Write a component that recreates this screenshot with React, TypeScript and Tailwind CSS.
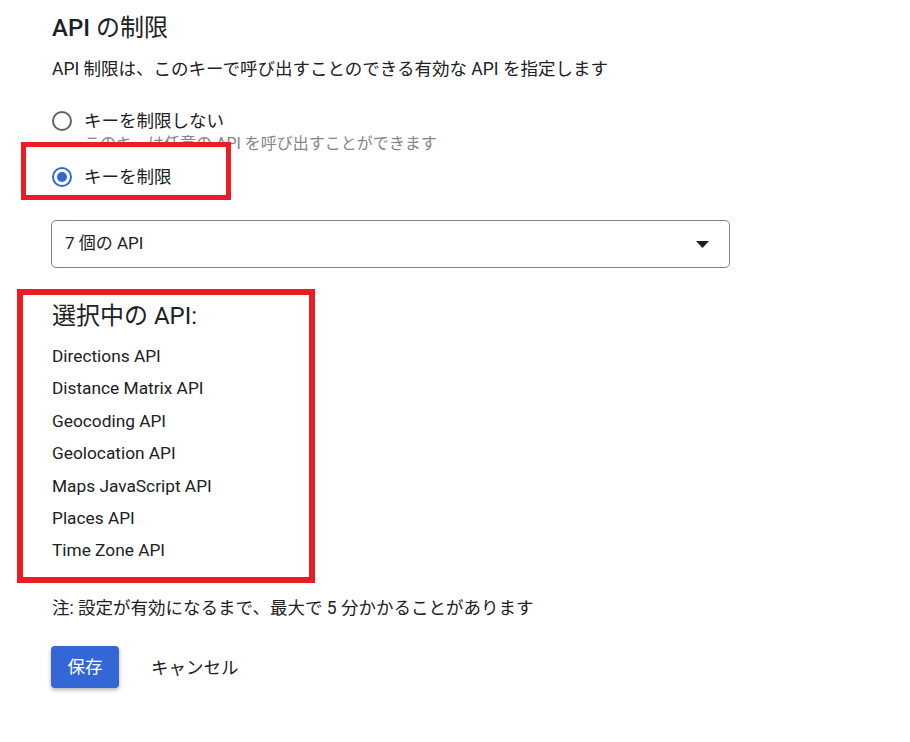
import React from "react";

const FONT = { fontFamily: "Roboto, 'Noto Sans CJK JP', sans-serif" };

function Radio({ checked }: { checked: boolean }) {
  return (
    <span
      className={
        "flex h-[20px] w-[20px] shrink-0 items-center justify-center rounded-full border-2 " +
        (checked ? "border-[#3367d6]" : "border-[#5f6368]")
      }
    >
      {checked && <span className="h-[10px] w-[10px] rounded-full bg-[#3367d6]" />}
    </span>
  );
}

const apis = [
  "Directions API",
  "Distance Matrix API",
  "Geocoding API",
  "Geolocation API",
  "Maps JavaScript API",
  "Places API",
  "Time Zone API",
];

export default function App() {
  return (
    <div className="min-h-[742px] w-[910px] bg-white text-[#202124]" style={FONT}>
      <div className="flex flex-col pl-[52px] pt-[12px]">
        <h1 className="text-[24px] leading-[32px]">
          <span className="font-medium">API</span> の制限
        </h1>
        <p className="mt-[13px] text-[17.5px] leading-[24px]">
          API 制限は、このキーで呼び出すことのできる有効な API を指定します
        </p>

        <label className="mt-[28px] flex h-[24px] items-center gap-[12px] text-[17.5px]">
          <Radio checked={false} />
          <span>キーを制限しない</span>
        </label>
        <p className="mt-[1px] pl-[32px] text-[16px] leading-[20px] text-[#80868b]">
          このキーは任意の API を呼び出すことができます
        </p>

        <div className="relative mt-[11px] h-[24px]">
          <div className="pointer-events-none absolute left-[-31px] top-[-23px] h-[58px] w-[210px] border-[5px] border-[#ed1c24] bg-white" />
          <label className="relative flex h-[24px] items-center gap-[12px] text-[17.5px]">
            <Radio checked={true} />
            <span>キーを制限</span>
          </label>
        </div>

        <div className="ml-[-1px] mt-[31px] flex h-[48px] w-[679px] items-center justify-between rounded-[5px] border border-[#80868b] pl-[13px] pr-[20px] text-[17px]">
          <span>7 個の API</span>
          <svg width="13" height="7" viewBox="0 0 13 7">
            <path d="M0 0 L13 0 L6.5 7 Z" fill="#202124" />
          </svg>
        </div>

        <div className="relative mt-[32px]">
          <div className="pointer-events-none absolute left-[-35px] top-[-11px] h-[294px] w-[298px] border-[6px] border-[#ed1c24]" />
          <h2 className="text-[24px] leading-[32px]">選択中の API:</h2>
          <ul className="mt-[8px] text-[17.3px]">
            {apis.map((a) => (
              <li key={a} className="leading-[32.4px]">
                {a}
              </li>
            ))}
          </ul>
        </div>

        <p className="mt-[29px] text-[17.5px] leading-[24px]">
          注: 設定が有効になるまで、最大で 5 分かかることがあります
        </p>

        <div className="mt-[26px] flex items-center">
          <button className="ml-[-1px] flex h-[42px] w-[68px] items-center justify-center rounded-[4px] bg-[#3367d6] text-[17.5px] text-white shadow-[0_2px_4px_rgba(0,0,0,0.3)]">
            保存
          </button>
          <button className="ml-[32px] mt-[3px] text-[17.5px]">キャンセル</button>
        </div>
      </div>
    </div>
  );
}
